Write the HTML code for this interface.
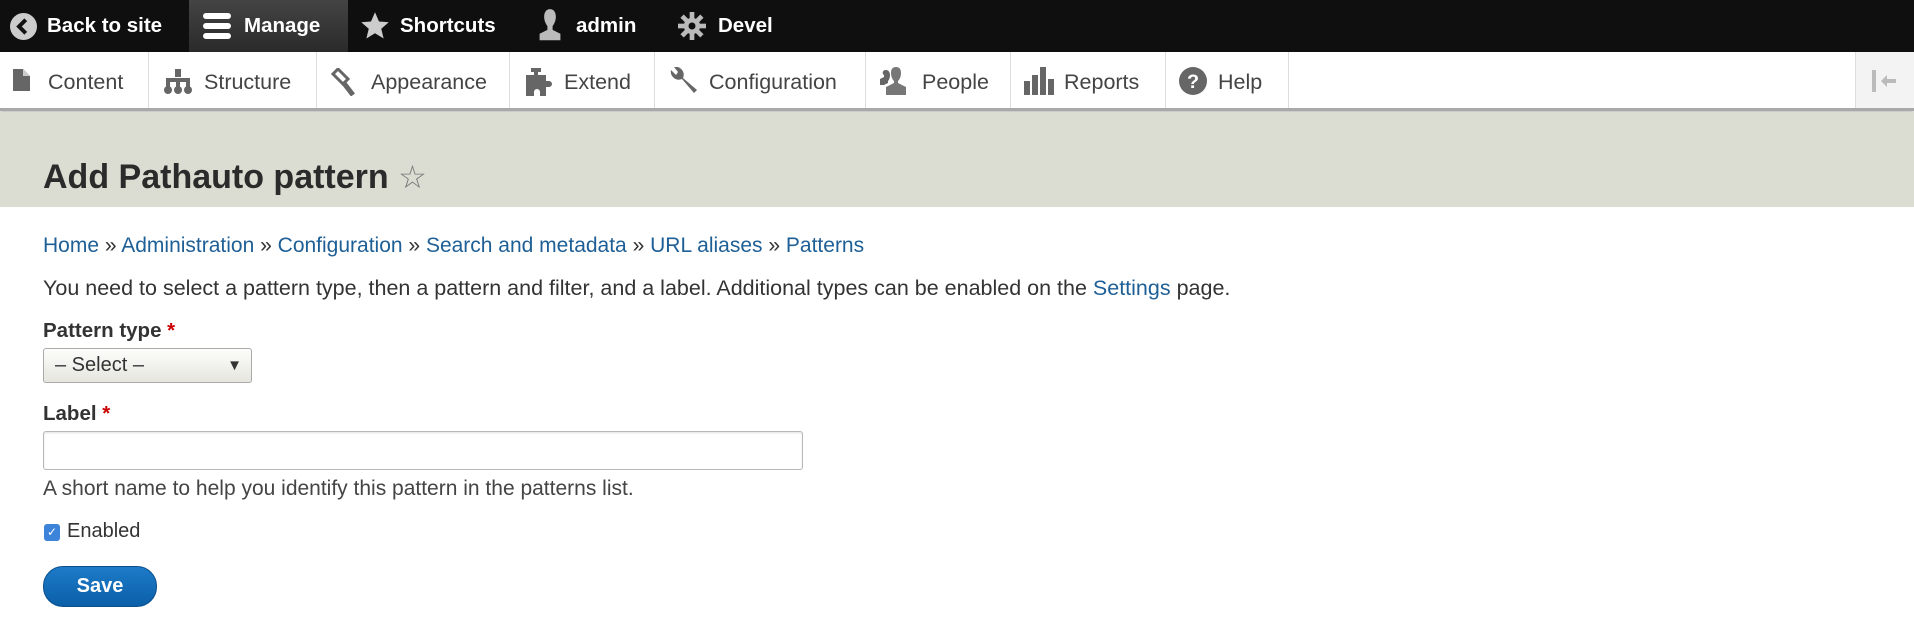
<!DOCTYPE html>
<html><head><meta charset="utf-8"><style>
*{box-sizing:border-box;margin:0;padding:0}
body{width:1914px;height:619px;overflow:hidden;background:#fff;font-family:"Liberation Sans",sans-serif;color:#333}
.top{position:absolute;left:0;top:0;width:1914px;height:52px;background:#0f0f0f;color:#fff;font-weight:bold;font-size:20.5px}
.top .it{position:absolute;top:0;height:52px;line-height:46px;display:flex;align-items:center}
.manage{position:absolute;left:189px;top:0;width:159px;height:52px;background:linear-gradient(#444,#2a2a2a)}
.nav{position:absolute;left:0;top:52px;width:1914px;height:59px;background:#fff;border-bottom:3px solid #a9a9a9;box-shadow:0 2px 3px rgba(0,0,0,.25);font-size:21.5px;color:#444}
.nav .it{position:absolute;top:2px;height:56px;line-height:56px}
.sep{position:absolute;top:0;width:1px;height:56px;background:#ddd}
.hdr{position:absolute;left:0;top:112px;width:1914px;height:95px;background:#dbdcd2}
h1{position:absolute;left:43px;top:158px;font-size:34px;font-weight:bold;color:#2b2b2b}
.c{position:absolute;left:43px;font-size:21px}
a{color:#1e5f96;text-decoration:none}
.req{color:#c00}
</style></head><body>
<div class="top">
 <div class="manage"></div>
 <div class="it" style="left:10px"><svg width="27" height="27" viewBox="0 0 24 24"><circle cx="12" cy="12" r="12" fill="#ccc"/><path d="M14 6l-6 6 6 6" stroke="#111" stroke-width="3.5" fill="none"/></svg></div>
 <div class="it" style="left:47px">Back to site</div>
 <div class="it" style="left:203px"><svg width="28" height="30" viewBox="0 0 28 30"><rect x="0" y="2" width="28" height="6" rx="3" fill="#fff"/><rect x="0" y="12" width="28" height="6" rx="3" fill="#fff"/><rect x="0" y="22" width="28" height="6" rx="3" fill="#fff"/></svg></div>
 <div class="it" style="left:244px">Manage</div>
 <div class="it" style="left:360px"><svg width="30" height="30" viewBox="0 0 24 24"><path d="M12 1l3.2 7.4 7.8.6-6 5.2 1.9 7.8L12 17.8 5.1 22l1.9-7.8-6-5.2 7.8-.6z" fill="#ccc"/></svg></div>
 <div class="it" style="left:400px">Shortcuts</div>
 <div class="it" style="left:537px"><svg width="26" height="34" viewBox="0 0 20 26"><path d="M10 0c3 0 4.5 2.5 4.5 6 0 3-1.5 6-2.5 7v3l6 3v5H2v-5l6-3v-3c-1-1-2.5-4-2.5-7C5.5 2.5 7 0 10 0z" fill="#bbb"/></svg></div>
 <div class="it" style="left:576px">admin</div>
 <div class="it" style="left:678px"><svg width="28" height="28" viewBox="0 0 24 24"><g fill="#bbb"><circle cx="12" cy="12" r="7"/><rect x="10" y="0" width="4" height="24"/><rect x="0" y="10" width="24" height="4"/><rect x="10" y="0" width="4" height="24" transform="rotate(45 12 12)"/><rect x="10" y="0" width="4" height="24" transform="rotate(-45 12 12)"/></g><circle cx="12" cy="12" r="3" fill="#0f0f0f"/></svg></div>
 <div class="it" style="left:718px">Devel</div>
</div>
<div class="nav">
 <div class="sep" style="left:148px"></div><div class="sep" style="left:316px"></div><div class="sep" style="left:509px"></div><div class="sep" style="left:654px"></div><div class="sep" style="left:865px"></div><div class="sep" style="left:1010px"></div><div class="sep" style="left:1165px"></div><div class="sep" style="left:1288px"></div>
 <div style="position:absolute;left:1855px;top:0;width:59px;height:56px;background:#f3f3f3;border-left:1px solid #ddd"></div>
 <svg style="position:absolute;left:1872px;top:18px" width="26" height="22" viewBox="0 0 26 22"><rect x="0" y="0" width="4" height="22" fill="#bbb"/><path d="M9 11l6-6v4h9v4h-9v4z" fill="#bbb"/></svg>
 <svg style="position:absolute;left:13px;top:17px" width="17" height="22" viewBox="0 0 17 22"><path d="M0 0h10l7 7v15H0z" fill="#666"/><path d="M10 0v7h7" fill="#ccc"/></svg>
 <div class="it" style="left:48px">Content</div>
 <svg style="position:absolute;left:163px;top:17px" width="30" height="26" viewBox="0 0 30 26"><g fill="#666"><rect x="12" y="0" width="6" height="8"/><rect x="3" y="9" width="24" height="4"/><rect x="3" y="9" width="4" height="10"/><rect x="13" y="9" width="4" height="10"/><rect x="23" y="9" width="4" height="10"/><circle cx="5" cy="21" r="4"/><circle cx="15" cy="21" r="4"/><circle cx="25" cy="21" r="4"/></g></svg>
 <div class="it" style="left:204px">Structure</div>
 <svg style="position:absolute;left:329px;top:16px" width="30" height="28" viewBox="0 0 30 28"><path d="M9 1l10 10-5 5L4 6z" fill="none" stroke="#666" stroke-width="3"/><path d="M14 14l10 13" stroke="#666" stroke-width="5"/></svg>
 <div class="it" style="left:371px">Appearance</div>
 <svg style="position:absolute;left:523px;top:16px" width="30" height="28" viewBox="0 0 30 28"><path d="M8 0h10v4h-3v3h8v6h3a3 3 0 010 6h-3v9h-6v-4a3 3 0 00-6 0v4H3V7h8V4H8z" fill="#666"/></svg>
 <div class="it" style="left:564px">Extend</div>
 <svg style="position:absolute;left:668px;top:15px" width="30" height="30" viewBox="0 0 30 30"><path d="M3 3a8 8 0 0011 9l12 14 3-3-14-12a8 8 0 00-9-11l4 5-2 3z" fill="#666"/></svg>
 <div class="it" style="left:709px">Configuration</div>
 <svg style="position:absolute;left:880px;top:15px" width="32" height="30" viewBox="0 0 32 30"><path d="M16 0c4 0 5 3 5 6s-1 6-3 8v2l8 4v8H6v-8l8-4v-2c-2-2-3-5-3-8s1-6 5-6z" fill="#777"/><path d="M6 3c3 0 4 3 4 5 0 3-1 5-2 6v2l-4 2H0v-6l4-2v-2C2 7 2 3 6 3z" fill="#666"/></svg>
 <div class="it" style="left:922px">People</div>
 <svg style="position:absolute;left:1024px;top:15px" width="30" height="28" viewBox="0 0 30 28"><g fill="#666"><rect x="0" y="14" width="6" height="14"/><rect x="8" y="8" width="6" height="20"/><rect x="16" y="0" width="6" height="28"/><rect x="24" y="12" width="6" height="16"/></g></svg>
 <div class="it" style="left:1064px">Reports</div>
 <svg style="position:absolute;left:1179px;top:15px" width="28" height="28" viewBox="0 0 24 24"><circle cx="12" cy="12" r="12" fill="#666"/><text x="12" y="18" font-family="Liberation Sans" font-weight="bold" font-size="17" fill="#fff" text-anchor="middle">?</text></svg>
 <div class="it" style="left:1218px">Help</div>
</div>
<div class="hdr"></div>
<h1>Add Pathauto pattern <span style="font-weight:normal;color:#777;font-size:32px">☆</span></h1>
<div class="c" style="top:234px"><a>Home</a> » <a>Administration</a> » <a>Configuration</a> » <a>Search and metadata</a> » <a>URL aliases</a> » <a>Patterns</a></div>
<div class="c" style="top:276px;font-size:21.5px">You need to select a pattern type, then a pattern and filter, and a label. Additional types can be enabled on the <a>Settings</a> page.</div>
<div class="c" style="top:319px;font-weight:bold;font-size:20.5px">Pattern type <span class="req">*</span></div>
<div style="position:absolute;left:43px;top:348px;width:209px;height:35px;border:1px solid #aaa;border-radius:3px;background:linear-gradient(#fdfdfb,#e6e6df);font-size:20px;line-height:33px;padding-left:11px">– Select –<span style="position:absolute;right:9px;top:0;font-size:15px">▼</span></div>
<div class="c" style="top:402px;font-weight:bold;font-size:20.5px">Label <span class="req">*</span></div>
<div style="position:absolute;left:43px;top:431px;width:760px;height:39px;border:1px solid #b8b8b8;border-radius:3px;background:#fff;box-shadow:inset 0 1px 2px rgba(0,0,0,.12)"></div>
<div class="c" style="top:477px;font-size:21px;color:#444">A short name to help you identify this pattern in the patterns list.</div>
<div style="position:absolute;left:44px;top:524px;width:16px;height:17px;border-radius:3px;background:#3b84d9;color:#fff;font-size:12px;line-height:17px;text-align:center">✓</div>
<div class="c" style="top:520px;left:67px;font-size:20px">Enabled</div>
<div style="position:absolute;left:43px;top:566px;width:114px;height:41px;border-radius:20px;background:linear-gradient(#1d7bc8,#0b5fa8);border:1px solid #0a4f8c;color:#fff;font-weight:bold;font-size:20px;text-align:center;line-height:39px">Save</div>
</body></html>
